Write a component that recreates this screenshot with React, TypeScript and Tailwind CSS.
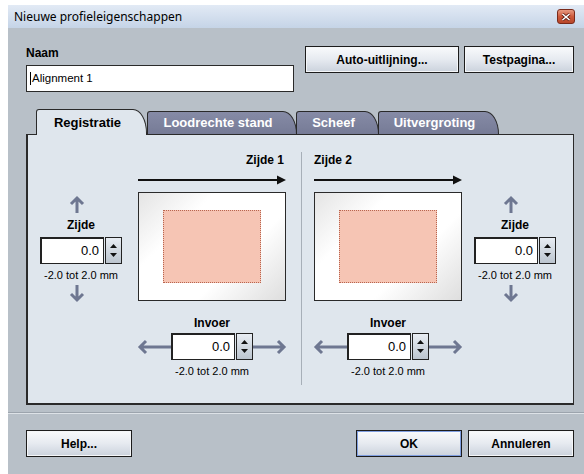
import React from "react";

const SANS = "font-['Liberation_Sans',Arial,sans-serif]";

function UpArrow() {
  return (
    <svg width="16" height="18" viewBox="0 0 16 18" className="block">
      <path d="M8 18 V3 M2 9 L8 3 L14 9" fill="none" stroke="#6e7791" strokeWidth="3" />
    </svg>
  );
}
function DownArrow() {
  return (
    <svg width="16" height="18" viewBox="0 0 16 18" className="block">
      <path d="M8 0 V15 M2 9 L8 15 L14 9" fill="none" stroke="#6e7791" strokeWidth="3" />
    </svg>
  );
}
function LeftArrow() {
  return (
    <svg width="34" height="16" viewBox="0 0 34 16" className="block">
      <path d="M34 8 H3 M9 2 L3 8 L9 14" fill="none" stroke="#6e7791" strokeWidth="3" />
    </svg>
  );
}
function RightArrow() {
  return (
    <svg width="34" height="16" viewBox="0 0 34 16" className="block">
      <path d="M0 8 H31 M25 2 L31 8 L25 14" fill="none" stroke="#6e7791" strokeWidth="3" />
    </svg>
  );
}
function BlackArrow() {
  return (
    <svg width="148" height="10" viewBox="0 0 148 10" className="block">
      <path d="M0 5 H140" stroke="#111" strokeWidth="2" />
      <path d="M139 0.5 L148 5 L139 9.5 Z" fill="#111" />
    </svg>
  );
}

function Spinner() {
  return (
    <div className="flex h-[27px] gap-[1px]">
      <div className="w-[64px] h-full bg-white border border-[#222] border-t-2 border-l-2 flex items-center justify-end pr-[4px] text-[13px] text-black">
        0.0
      </div>
      <div className="w-[17px] h-full border border-[#222] bg-gradient-to-b from-[#e8edf3] to-[#bcc5cf] flex flex-col items-center justify-between py-[6px]">
        <svg width="7" height="4" viewBox="0 0 7 4" className="block">
          <path d="M0 4 L3.5 0 L7 4 Z" fill="#111" />
        </svg>
        <svg width="7" height="4" viewBox="0 0 7 4" className="block">
          <path d="M0 0 L3.5 4 L7 0 Z" fill="#111" />
        </svg>
      </div>
    </div>
  );
}

function ZijdeCol() {
  return (
    <div className="flex flex-col items-center">
      <div className="-ml-[9px]"><UpArrow /></div>
      <div className="mt-[5px] h-[14px] leading-[14px] text-[12px] font-bold text-black">Zijde</div>
      <div className="mt-[5px]"><Spinner /></div>
      <div className="mt-[5px] h-[12px] leading-[12px] text-[11px] text-black">-2.0 tot 2.0 mm</div>
      <div className="mt-[4px] -ml-[9px]"><DownArrow /></div>
    </div>
  );
}

function Paper() {
  return (
    <div className="w-[148px] h-[109px] border border-[#2a2a2a] bg-[linear-gradient(135deg,#e4e4e4_0%,#ffffff_30%,#ffffff_65%,#dedede_100%)] flex items-center justify-center">
      <div className="w-[98px] h-[73px] bg-[#f6c5b4] border border-dotted border-[#b8654f]" />
    </div>
  );
}

function Diagram({ label, align }: { label: string; align: "left" | "right" }) {
  return (
    <div className="w-[148px] flex flex-col pt-[18px]">
      <div className={`h-[14px] leading-[14px] text-[12px] font-bold text-black ${align === "right" ? "text-right pr-[2px]" : "text-left"}`}>
        {label}
      </div>
      <div className="mt-[8px]"><BlackArrow /></div>
      <div className="mt-[7px]"><Paper /></div>
      <div className="mt-[15px] h-[14px] leading-[14px] text-center text-[12px] font-bold text-black">Invoer</div>
      <div className="mt-[3px] flex items-center justify-center -mx-[2px]">
        <LeftArrow />
        <Spinner />
        <RightArrow />
      </div>
      <div className="mt-[5px] h-[12px] leading-[12px] text-center text-[11px] text-black">-2.0 tot 2.0 mm</div>
    </div>
  );
}

function Btn({ children, w, focus }: { children: React.ReactNode; w: string; focus?: boolean }) {
  return (
    <div className={`${w} h-[27px] border border-[#1c1c1c] bg-[#1c1c1c]`}>
      <div
        className={`w-full h-full flex items-center justify-center text-[12px] font-bold text-black bg-gradient-to-b from-[#f7f9fb] via-[#e6eaf0] to-[#cdd4de] border ${
          focus ? "border-[#7f9ee0]" : "border-[#f4f6f8]"
        }`}
      >
        {children}
      </div>
    </div>
  );
}

function Tab({ label, active, w, extra }: { label: string; active?: boolean; w: string; extra?: string }) {
  if (active) {
    return (
      <div
        className={`${w} h-[26px] relative z-10 -mb-px bg-[#dfe6ed] border border-b-0 border-[#2a2a2a] rounded-tl-[3px] rounded-tr-[14px_24px] flex items-center justify-center pr-[8px] text-[13px] font-bold text-black ${extra ?? ""}`}
      >
        {label}
      </div>
    );
  }
  return (
    <div
      className={`${w} h-[23px] bg-gradient-to-b from-[#868ba6] to-[#767b96] border border-b-0 border-[#2a2a2a] rounded-tl-[3px] rounded-tr-[14px_23px] flex items-center justify-center pr-[8px] text-[13px] font-bold text-white ${extra ?? ""}`}
    >
      {label}
    </div>
  );
}

export default function App() {
  return (
    <div className={`w-[584px] h-[474px] bg-white pt-[5px] pl-[8px] overflow-hidden ${SANS}`}>
      <div className="w-[576px] h-[469px] bg-[#b8c0c8] flex flex-col">
        {/* Title bar */}
        <div className="h-[23px] flex items-center justify-between pl-[6px] pr-[9px] bg-gradient-to-b from-[#e2eaf5] to-[#c5d4e7]">
          <span className="text-[12px] text-black font-['Noto_Sans',Arial,sans-serif] leading-none">Nieuwe profieleigenschappen</span>
          <div className="w-[18px] h-[15px] rounded-[3px] border border-[#7a2a1a] bg-gradient-to-b from-[#e79a82] via-[#cd5a3c] to-[#b8462a] flex items-center justify-center">
            <svg width="10" height="8" viewBox="0 0 10 8">
              <path d="M1.5 1 L8.5 7 M8.5 1 L1.5 7" stroke="#5a1a10" strokeWidth="3" />
              <path d="M1.5 1 L8.5 7 M8.5 1 L1.5 7" stroke="#ffffff" strokeWidth="1.6" />
            </svg>
          </div>
        </div>

        {/* Content */}
        <div className="pl-[18px] pr-[10px] pt-[18px]">
          <div className="flex items-start">
            <div className="w-[268px] flex flex-col">
              <div className="h-[14px] leading-[14px] text-[12px] font-bold text-black">Naam</div>
              <div className="mt-[5px] h-[27px] bg-white border border-[#2a2a2a] flex items-center pl-[3px] text-[11.5px] text-black">
                <span className="w-px h-[13px] bg-black mr-[1px]" />
                Alignment 1
              </div>
            </div>
            <div className="ml-[11px]"><Btn w="w-[154px]">Auto-uitlijning...</Btn></div>
            <div className="ml-[5px]"><Btn w="w-[110px]">Testpagina...</Btn></div>
          </div>

          {/* Tabs */}
          <div className="mt-[17px] flex items-end pl-[10px] h-[25px]">
            <Tab label="Registratie" active w="w-[111px]" />
            <Tab label="Loodrechte stand" w="w-[150px]" />
            <Tab label="Scheef" w="w-[83px]" extra="-ml-px" />
            <Tab label="Uitvergroting" w="w-[121px]" extra="-ml-px" />
          </div>

          {/* Panel */}
          <div className="w-[548px] h-[271px] bg-[#dfe6ed] border border-[#2a2a2a] border-l-2 border-b-2 flex">
            <div className="w-[273px] flex items-start">
              <div className="w-[110px] pt-[60px] flex justify-center pr-[4px]">
                <ZijdeCol />
              </div>
              <Diagram label="Zijde 1" align="right" />
            </div>
            <div className="mt-[17px] h-[233px] w-px bg-[#a7afb8]" />
            <div className="flex items-start pl-[12px]">
              <Diagram label="Zijde 2" align="left" />
              <div className="w-[106px] pt-[60px] flex justify-center">
                <ZijdeCol />
              </div>
            </div>
          </div>
        </div>

        {/* Separator */}
        <div className="mt-[7px] h-px bg-[#9ca4ad]" />
        <div className="h-px bg-[#dde2e7]" />

        {/* Bottom buttons */}
        <div className="mt-[16px] pl-[18px] pr-[10px] flex items-center">
          <Btn w="w-[106px]">Help...</Btn>
          <div className="flex-1" />
          <Btn w="w-[106px]" focus>OK</Btn>
          <div className="ml-[6px]"><Btn w="w-[106px]">Annuleren</Btn></div>
        </div>
      </div>
    </div>
  );
}
